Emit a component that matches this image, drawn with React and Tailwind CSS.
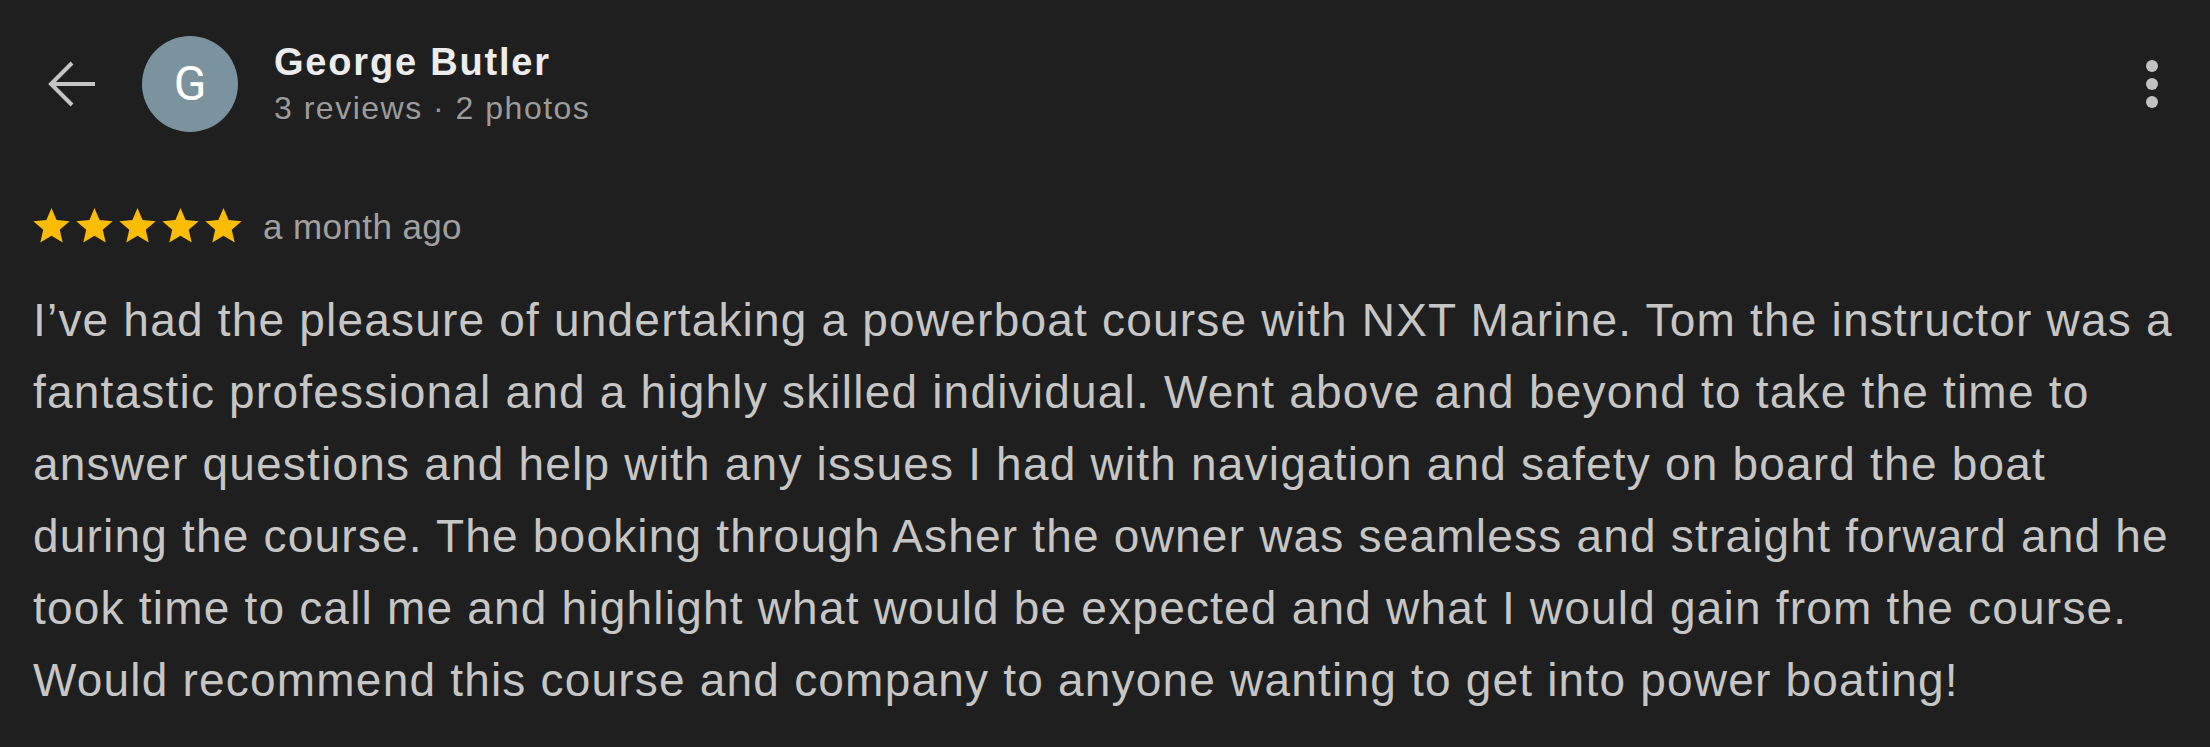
export default function App() {
  const star = (
    <svg viewBox="2 2 20 19.27" width="37" height="35" className="block">
      <path fill="#fbbc04" d="M12 17.27L18.18 21l-1.64-7.03L22 9.24l-7.19-.61L12 2 9.19 8.63 2 9.24l5.46 4.73L5.82 21z" />
    </svg>
  );
  return (
    <div className="w-full h-screen bg-[#1f1f1f] overflow-hidden" style={{ fontFamily: '"Liberation Sans", Arial, sans-serif' }}>
      <div className="flex items-start pt-[36px] pl-[47px] pr-[52px]">
        <svg width="48" height="46" viewBox="0 0 48 46" className="mt-[25px] shrink-0" fill="none" stroke="#c4c4c4" strokeWidth="4" strokeLinecap="butt" strokeLinejoin="miter">
          <path d="M48 23H4" />
          <path d="M25 2L4 23l21 21" />
        </svg>
        <div className="ml-[47px] w-[96px] h-[96px] rounded-full bg-[#7a939e] flex items-center justify-center shrink-0">
          <span className="text-white text-[48px] leading-none" style={{ fontFamily: 'Roboto, sans-serif' }}>G</span>
        </div>
        <div className="ml-[36px] mt-[4px] flex flex-col">
          <span className="text-[#ececec] text-[38px] leading-[44px] font-bold tracking-[1.8px]">George Butler</span>
          <span className="text-[#9c9c9c] text-[32px] leading-[40px] mt-[4px] tracking-[1.5px]">3 reviews · 2 photos</span>
        </div>
        <div className="ml-auto mt-[24px] flex flex-col gap-[6px]">
          <div className="w-[12px] h-[12px] rounded-full bg-[#c2c2c2]" />
          <div className="w-[12px] h-[12px] rounded-full bg-[#c2c2c2]" />
          <div className="w-[12px] h-[12px] rounded-full bg-[#c2c2c2]" />
        </div>
      </div>
      <div className="flex items-start mt-[76px] pl-[33px] h-[35px]">
        <div className="flex gap-[6px]">
          {star}{star}{star}{star}{star}
        </div>
        <span className="ml-[21px] mt-[1px] text-[35px] leading-[35px] tracking-[0.4px] text-[#a0a0a0]">a month ago</span>
      </div>
      <p className="mt-[41px] pl-[33px] pr-[24px] text-[46px] leading-[72px] tracking-[1.2px] text-[#c6c6c6]">
        I’ve had the pleasure of undertaking a powerboat course with NXT Marine. Tom the instructor was a fantastic professional and a highly skilled individual. Went above and beyond to take the time to answer questions and help with any issues I had with navigation and safety on board the boat during the course. The booking through Asher the owner was seamless and straight forward and he took time to call me and highlight what would be expected and what I would gain from the course. Would recommend this course and company to anyone wanting to get into power boating!
      </p>
    </div>
  );
}
